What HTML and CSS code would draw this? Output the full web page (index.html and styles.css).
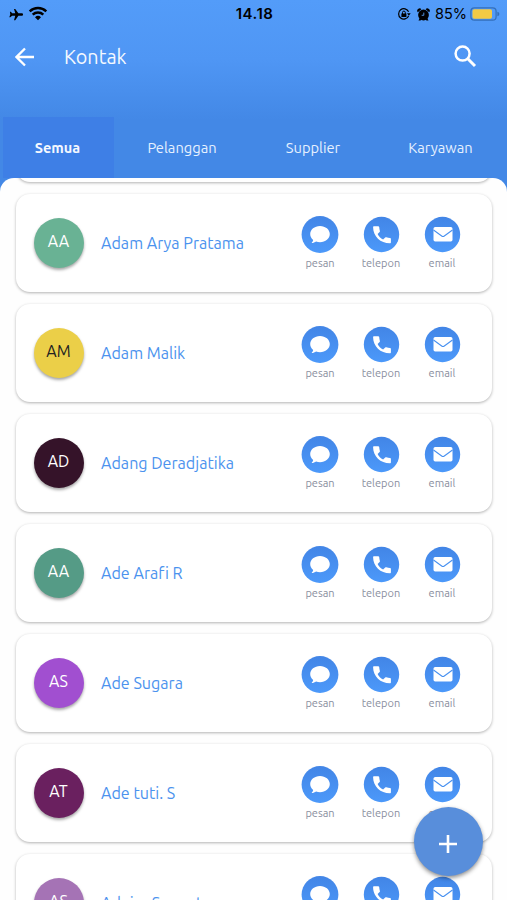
FILE: index.html
```html
<!DOCTYPE html>
<html lang="id">
<head>
<meta charset="utf-8">
<title>Kontak</title>
<link rel="stylesheet" href="styles.css">
</head>
<body>
<svg class="defs" width="0" height="0">
  <defs>
    <linearGradient id="blue" x1="0" y1="0" x2="0" y2="1"><stop offset="0" stop-color="#4285e6"/><stop offset="1" stop-color="#4c99fa"/></linearGradient>
    <symbol id="chat" viewBox="0 0 38 38"><circle cx="19" cy="18.500" r="18.400" fill="url(#blue)"/><path fill="#fff" d="M19 10c5.500 0 9.800 3.600 9.800 8.100s-4.300 8.100-9.800 8.100c-1.400 0-2.700-.2-3.900-.6-1.200.9-2.700 1.500-4.500 1.500.9-.9 1.400-2 1.600-3.100-1.900-1.500-3-3.600-3-5.900 0-4.500 4.300-8.100 9.800-8.100z"/></symbol>
    <symbol id="phone" viewBox="0 0 38 38"><circle cx="19.500" cy="18.500" r="17.700" fill="url(#blue)"/><path fill="#fff" d="M12.100 10.200h4.100c.5 0 .9.400 1 .9.100 1.400.3 2.600.7 3.800.1.400 0 .8-.3 1.100l-2 2.100c1.300 2.600 2.900 4.200 5.500 5.500l2.100-2c.3-.3.700-.4 1.100-.3 1.200.4 2.400.6 3.700.7.500 0 .9.500.9 1v3.300c0 .6-.4 1-1 1-9.400 0-16.800-7-16.800-16.100 0-.6.400-1 1-1z"/></symbol>
    <symbol id="mail" viewBox="0 0 38 38"><circle cx="19.500" cy="18.500" r="17.700" fill="url(#blue)"/><rect x="10.500" y="11" width="19" height="14.500" rx="1.700" fill="#fff"/><path d="M10.500 14l8.200 6q1.300.9 2.600 0l8.200-6" fill="none" stroke="#4790f0" stroke-width="1.100"/></symbol>
  </defs>
</svg>
<div class="screen">
  <header class="header">
    <div class="status">
      <div class="status-left">
        <svg width="15" height="15" viewBox="0 0 24 24"><path transform="rotate(90 12 12)" d="M21 16v-2l-7-5V3.500a2 2 0 0 0-4 0V9l-7 5v2l7-2v5l-2.500 2v1.500L12 22l4.500 1.500V22L14 19v-5z"/></svg>
        <svg width="20" height="15" viewBox="0 0 20 15"><g fill="none" stroke="#000" stroke-width="2.400"><path d="M1.700 5.300a12 12 0 0 1 16.600 0"/><path d="M4.700 8.700a7.600 7.600 0 0 1 10.600 0"/></g><path d="M7 11.300a4.300 4.300 0 0 1 6 0l-3 3z"/></svg>
      </div>
      <div class="clock">14.18</div>
      <div class="status-right">
        <svg width="14" height="14" viewBox="0 0 14 14"><path d="M11.600 9a5.200 5.200 0 1 1 0-4.200" fill="none" stroke="#000" stroke-width="1.200"/><path d="M10 6.200h3.700l-1.900 2.600zM4.400 6.600h5v3.300h-5z"/><path d="M5.500 7V5.500a1.400 1.400 0 0 1 2.800 0V7" fill="none" stroke="#000"/></svg>
        <svg class="alarm" width="13" height="13" viewBox="0 0 13 13"><circle cx="6.500" cy="7" r="5.400"/><path d="M.8 4.200a2.100 2.100 0 0 1 3.600-3zM12.200 4.200a2.100 2.100 0 0 0-3.600-3zM1.500 12.500l1.500-3 1.500 2-1 1zM11.500 12.500l-1.500-3-1.500 2 1 1z"/><path d="M6.800 4.600v2.700H4.700" fill="none" stroke="#589cf0" stroke-width=".9"/></svg>
        <span class="percent">85%</span>
        <svg class="battery" width="30" height="14" viewBox="0 0 30 14"><rect x=".9" y=".8" width="25.200" height="12.400" rx="3.500" fill="none" stroke="#346fb9" stroke-width="1.200"/><rect x="2.500" y="2.300" width="19.500" height="9.400" rx="1.800" fill="#f3ca45"/><path d="M27.400 4.800q2 .5 2 2.200t-2 2.200z" fill="#346fb9"/></svg>
      </div>
    </div>
    <div class="toolbar">
      <svg width="20" height="20" viewBox="0 0 20 20"><path d="M19 10H2M10 1.500L1.500 10l8.500 8.500" fill="none" stroke="#fff" stroke-width="2.300"/></svg>
      <h1 class="title">Kontak</h1>
      <svg class="search" width="24" height="24" viewBox="0 0 24 24"><circle cx="9.600" cy="9.600" r="7" fill="none" stroke="#fff" stroke-width="2.500"/><path d="M14.800 14.800l7.200 7.200" stroke="#fff" stroke-width="3"/></svg>
    </div>
    <nav class="tabs">
      <a class="tab active">Semua</a><a class="tab">Pelanggan</a><a class="tab">Supplier</a><a class="tab">Karyawan</a>
    </nav>
  </header>
  <main class="list" id="list"></main>
  <button class="fab" aria-label="Tambah"><svg width="18" height="18" viewBox="0 0 18 18"><path d="M9 0v18M0 9h18" stroke="#fff" stroke-width="2.600"/></svg></button>
</div>
<script src="app.js"></script>
</body>
</html>
```
FILE: styles.css
```css
* { box-sizing: border-box; }
body { margin: 0; font-family: Ubuntu, "Noto Sans", sans-serif; font-variant-ligatures: none; }
.defs { position: absolute; }
.screen { position: relative; width: 507px; height: 900px; overflow: hidden; background: linear-gradient(#539cf9, #4f96f4 60px, #4388e6 120px, #4388e6 200px); }
.header { height: 178px; }
.status { display: grid; grid-template-columns: 1fr 60px 1fr; height: 28px; align-items: center; padding: 0 7px 0 9px; }
.status-left { display: flex; align-items: center; gap: 4px; }
.status-left svg:last-child { margin-top: -2px; }
.clock { font: 600 15px/20px Inter, sans-serif; text-align: center; letter-spacing: .45px; white-space: nowrap; }
.status-right { display: flex; align-items: center; justify-content: flex-end; }
.alarm { margin: 0 5px 0 6px; }
.percent { font: 14.500px/20px Inter, sans-serif; }
.battery { margin-left: 3px; }
.toolbar { display: flex; align-items: center; height: 58px; padding: 0 30px 0 15px; }
.title { margin: -1px 0 0 29px; color: #f4f9ff; font-size: 19.800px; font-weight: 400; line-height: 28px; }
.search { margin-left: auto; margin-top: -2px; }
.tabs { display: grid; grid-template-columns: 111px 136px 126px 129px; height: 61px; margin: 31px 0 0 3px; }
.tab { display: flex; align-items: center; justify-content: center; color: #e6f1ff; font-size: 14.700px; }
.active { padding-right: 2px; background: #3e7fe6; color: #f4f8ff; font-weight: 600; font-size: 14.500px; }
.list { display: flex; flex-direction: column; gap: 12px; height: 722px; padding: 0 15px 0 16px; overflow: hidden; border-radius: 14px 14px 0 0; background: #fefefe; }
.card { display: flex; flex: none; align-items: flex-start; height: 98px; padding: 0 30px 0 18px; border-radius: 14px; background: #fff; box-shadow: 0 1px 3px rgba(0,0,0,.3); }
.card.previous { margin-top: -94px; }
.avatar { flex: none; display: flex; align-items: center; justify-content: center; width: 50px; height: 50px; margin-top: 24px; padding: 0 1px 4px 0; border-radius: 50%; color: #fff; font-size: 16px; box-shadow: 0 2px 3px rgba(0,0,0,.35); }
.name { flex: 1; margin: 37px 0 0 17px; color: #4b92ee; font-size: 16.100px; line-height: 24px; white-space: nowrap; }
.actions { display: grid; grid-template-columns: 61px 61px 61px; width: 183px; margin-right: -10.500px; }
.action { display: flex; flex-direction: column; align-items: center; padding-top: 22px; color: #8b8fa0; font-size: 11px; line-height: 15px; }
.action svg { margin-bottom: 2px; }
.fab { position: absolute; left: 414px; top: 807px; display: flex; align-items: center; justify-content: center; width: 69px; height: 69px; padding: 5px 2px 0 0; border: 0; border-radius: 50%; background: #588edb; box-shadow: 0 2px 4px rgba(0,0,0,.45); }
```
FILE: app.js
```js
const contacts = [
  ["AA", "Adam Arya Pratama", "#69b294"],
  ["AM", "Adam Malik", "#ebcf48", "#222"],
  ["AD", "Adang Deradjatika", "#351329"],
  ["AA", "Ade Arafi R", "#559b86"],
  ["AS", "Ade Sugara", "#a14fd0"],
  ["AT", "Ade tuti. S", "#6a205f"],
  ["AS", "Adeira Sunanto", "#a573b5"]
];
const action = (icon, label) => `<div class="action"><svg width="38" height="38"><use href="#${icon}"/></svg><span>${label}</span></div>`;
document.getElementById("list").innerHTML = '<article class="card previous"></article>' + contacts.map(([initials, name, color, ink]) => `
  <article class="card">
    <div class="avatar" style="background:${color};color:${ink || "#fff"}">${initials}</div>
    <div class="name"><span>${name}</span></div>
    <div class="actions">${action("chat", "pesan")}${action("phone", "telepon")}${action("mail", "email")}</div>
  </article>`).join("");
```
